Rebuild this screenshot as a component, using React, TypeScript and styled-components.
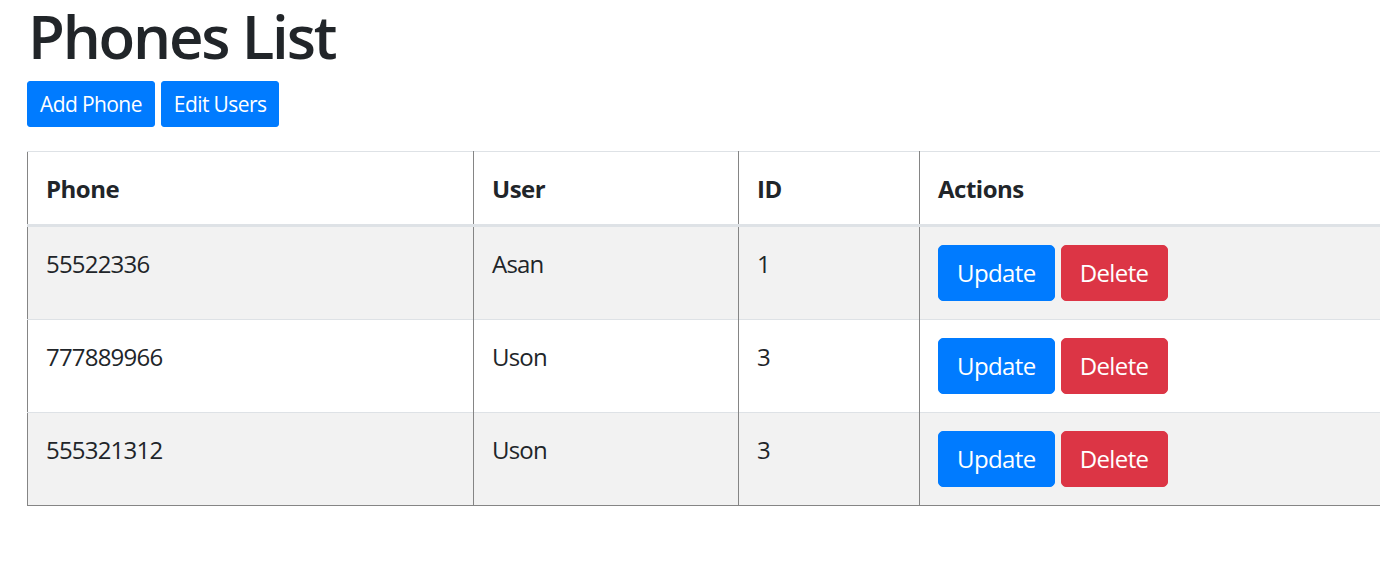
import React from 'react';
import styled, { createGlobalStyle } from 'styled-components';

const Global = createGlobalStyle`
  html, body { margin: 0; padding: 0; background: #fff; }
  body {
    font-family: "Open Sans", "Noto Sans", sans-serif;
    color: #212529;
    overflow: hidden;
  }
`;

const Page = styled.div`
  padding-left: 27px;
  width: 1600px;
`;

const Title = styled.h1`
  margin: 0 0 9px;
  padding-left: 1px;
  font-size: 60px;
  font-weight: 600;
  line-height: 72px;
  letter-spacing: -2.2px;
`;

const Toolbar = styled.div`
  display: flex;
  gap: 6px;
  margin-bottom: 24px;
`;

const Button = styled.button<{ $variant: 'primary' | 'danger'; $size?: 'sm' | 'md' }>`
  font-family: inherit;
  color: #fff;
  background: ${p => (p.$variant === 'danger' ? '#dc3545' : '#007bff')};
  border: 1px solid ${p => (p.$variant === 'danger' ? '#dc3545' : '#007bff')};
  border-radius: ${p => (p.$size === 'sm' ? '3px' : '5px')};
  font-size: ${p => (p.$size === 'sm' ? '21px' : '24px')};
  line-height: ${p => (p.$size === 'sm' ? '32px' : '36px')};
  padding: ${p => (p.$size === 'sm' ? '6px 12px' : '9px 18px')};
  letter-spacing: -0.6px;
  font-weight: 400;
  cursor: pointer;
`;

const Table = styled.table`
  border-collapse: collapse;
  table-layout: fixed;
  width: 1500px;
  border-left: 1px solid #858585;
  border-top: 1px solid #dee2e6;
`;

const HeadCell = styled.th`
  text-align: left;
  vertical-align: bottom;
  font-size: 24px;
  line-height: 36px;
  font-weight: 700;
  letter-spacing: -0.5px;
  padding: 19px 18px 17px;
  border-right: 1px solid #858585;
  border-bottom: 3px solid #dee2e6;
`;

const Row = styled.tr<{ $striped: boolean; $last: boolean }>`
  background: ${p => (p.$striped ? '#f2f2f2' : '#fff')};
  & > td {
    border-top: 1px solid #dee2e6;
    border-bottom: ${p => (p.$last ? '1px solid #858585' : 'none')};
  }
`;

const Cell = styled.td`
  vertical-align: top;
  font-size: 24px;
  line-height: 36px;
  letter-spacing: -0.8px;
  padding: 19px 18px 17px;
  border-right: 1px solid #858585;
`;

const ActionCell = styled(Cell)`
  padding: 18px;
  letter-spacing: normal;
`;

const Actions = styled.div`
  display: flex;
  gap: 6px;
`;

const phones = [
  { phone: '55522336', user: 'Asan', id: 1 },
  { phone: '777889966', user: 'Uson', id: 3 },
  { phone: '555321312', user: 'Uson', id: 3 },
];

export default function App() {
  return (
    <Page>
      <Global />
      <Title>Phones List</Title>
      <Toolbar>
        <Button $variant="primary" $size="sm">Add Phone</Button>
        <Button $variant="primary" $size="sm">Edit Users</Button>
      </Toolbar>
      <Table>
        <colgroup>
          <col style={{ width: 446 }} />
          <col style={{ width: 265 }} />
          <col style={{ width: 181 }} />
          <col />
        </colgroup>
        <thead>
          <tr>
            <HeadCell>Phone</HeadCell>
            <HeadCell>User</HeadCell>
            <HeadCell>ID</HeadCell>
            <HeadCell>Actions</HeadCell>
          </tr>
        </thead>
        <tbody>
          {phones.map((p, i) => (
            <Row key={i} $striped={i % 2 === 0} $last={i === phones.length - 1}>
              <Cell>{p.phone}</Cell>
              <Cell>{p.user}</Cell>
              <Cell>{p.id}</Cell>
              <ActionCell>
                <Actions>
                  <Button $variant="primary">Update</Button>
                  <Button $variant="danger">Delete</Button>
                </Actions>
              </ActionCell>
            </Row>
          ))}
        </tbody>
      </Table>
    </Page>
  );
}
